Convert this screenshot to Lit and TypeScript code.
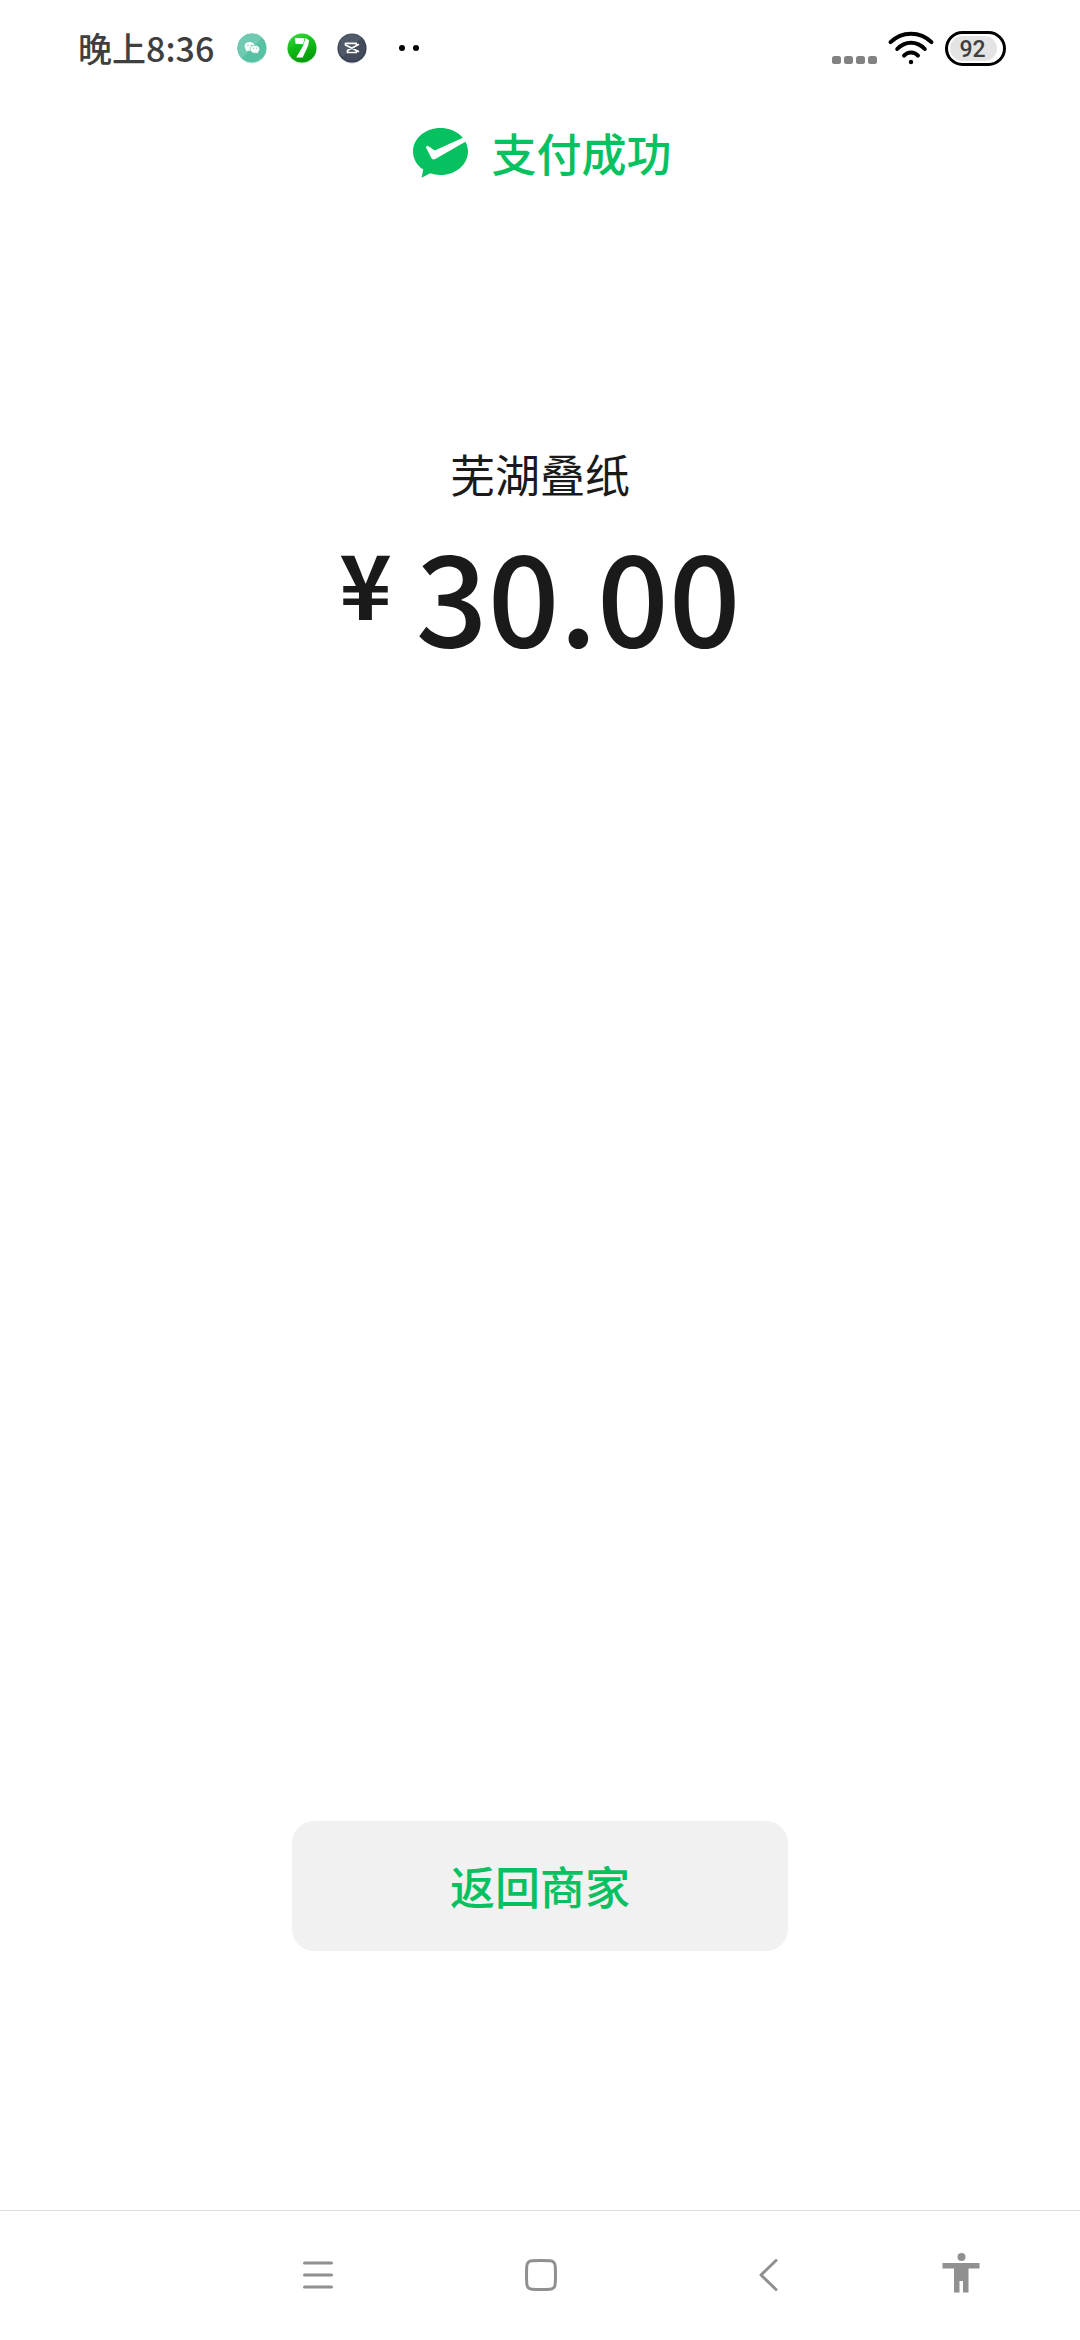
import { LitElement, html, css } from "lit";
import { customElement, property } from "lit/decorators.js";

@customElement("status-bar")
class StatusBar extends LitElement {
  @property() time = "";
  @property({ type: Number }) battery = 0;

  static styles = css`
    :host {
      display: flex;
      align-items: center;
      justify-content: space-between;
      height: 96px;
      padding: 0 74px 0 78px;
      color: #3f3f3f;
    }
    .side {
      display: flex;
      align-items: center;
    }
    .time {
      margin-right: 22px;
      font-size: 34px;
      line-height: 48px;
      font-weight: 500;
    }
    .apps {
      display: flex;
      gap: 18px;
      margin-right: 30px;
    }
    .signal {
      align-self: flex-end;
      margin-right: 9px;
    }
    .wifi {
      margin-right: 10px;
    }
    .battery {
      box-sizing: border-box;
      width: 61px;
      height: 35px;
      padding: 2px;
      border: 3px solid #000;
      border-radius: 18px;
    }
    .level {
      box-sizing: border-box;
      width: 92%;
      height: 25px;
      padding-right: 2px;
      border-radius: 13px;
      background: #e4e4e4;
      font-family: Roboto, "Liberation Sans", sans-serif;
      font-size: 23px;
      line-height: 28px;
      font-weight: 500;
      text-align: center;
    }
    svg {
      display: block;
    }
  `;

  render() {
    return html`
      <div class="side">
        <span class="time">${this.time}</span>
        <span class="apps">
          <svg width="32" height="32" viewBox="0 0 32 32" aria-hidden="true">
            <circle cx="16" cy="17" r="14.5" fill="#d5eee7" />
            <circle cx="16" cy="16" r="14.5" fill="#58c1a4" />
            <path d="M5.7 26.3A14.5 14.5 0 0 1 26.3 5.7Z" fill="#6fcab1" />
            <ellipse cx="13.6" cy="14.4" rx="5" ry="4.3" fill="#fff" />
            <path d="M10.3 17l-.4 2.6 2.6-1.4z" fill="#fff" />
            <ellipse cx="18.8" cy="17.2" rx="4.8" ry="4" fill="#fff" stroke="#5fc4a8" stroke-width=".7" />
            <path d="M20 20l2 1.5.2-2.5z" fill="#fff" />
            <g fill="#5fc4a8">
              <circle cx="12" cy="13.2" r=".7" />
              <circle cx="15.2" cy="13.2" r=".7" />
              <circle cx="17.4" cy="16.2" r=".6" />
              <circle cx="20.4" cy="16.2" r=".6" />
            </g>
          </svg>
          <svg width="32" height="32" viewBox="0 0 32 32" aria-hidden="true">
            <defs>
              <linearGradient id="g" x1="0" y1="0" x2=".4" y2="1">
                <stop offset="0" stop-color="#45dc48" />
                <stop offset=".5" stop-color="#12bd18" />
                <stop offset="1" stop-color="#079e0c" />
              </linearGradient>
            </defs>
            <circle cx="16" cy="17" r="14.5" fill="#cdeccd" />
            <circle cx="16" cy="16" r="14.5" fill="url(#g)" />
            <path d="M9 6L18.5 6.3 17.2 12.2 9.5 11.8Z" fill="#fff" />
            <path d="M19.5 6L23 8.3 22.3 13.2 16.7 25.6 10.2 25.6 17.2 13.6Z" fill="#fff" />
          </svg>
          <svg width="32" height="32" viewBox="0 0 32 32" aria-hidden="true">
            <circle cx="16" cy="17" r="14.5" fill="#c9ccd3" />
            <circle cx="16" cy="16" r="14.5" fill="#313b4d" />
            <circle cx="16" cy="15.4" r="13.4" fill="#424c5c" />
            <path d="M6.5 24.9A13.4 13.4 0 0 1 25.5 5.9Z" fill="#515a69" />
            <path
              d="M23 12.3L11.5 18.4V20.5H20.3V18.9M23 19.7L9.5 13V11.3H20.3V13"
              fill="none"
              stroke="#fff"
              stroke-width="1.7"
              stroke-linejoin="round"
            />
          </svg>
        </span>
        <svg width="22" height="8" viewBox="0 0 22 8" fill="#000" aria-hidden="true">
          <circle cx="4" cy="4" r="3" />
          <circle cx="18" cy="4" r="3" />
        </svg>
      </div>
      <div class="side">
        <svg class="signal" width="46" height="10" viewBox="0 0 46 10" fill="#828282" aria-hidden="true">
          <rect x="0" y="0" width="9" height="8" rx="2.5" />
          <rect x="12" y="0" width="9" height="8" rx="2.5" />
          <rect x="24" y="0" width="9" height="8" rx="2.5" />
          <rect x="36" y="0" width="9" height="8" rx="2.5" />
        </svg>
        <svg class="wifi" width="48" height="36" viewBox="0 0 48 36" aria-hidden="true">
          <g fill="none" stroke="#000" stroke-width="4" stroke-linecap="round">
            <path d="M3.5 12.2C14.8 .8 33.2 .8 44.5 12.2" />
            <path d="M10.2 19C18 10.6 30 10.6 37.8 19" />
            <path d="M17 25.6C20.800 21.400 27.200 21.400 31 25.600" />
          </g>
          <circle cx="24" cy="32" r="2.200" />
        </svg>
        <div class="battery"><div class="level">${this.battery}</div></div>
      </div>
    `;
  }
}

@customElement("nav-bar")
class NavBar extends LitElement {
  static styles = css`
    :host {
      display: grid;
      grid-template-columns: 226fr 220fr 234fr 151fr;
      height: 127px;
      padding: 0 4% 2px 19%;
      border-top: 1px solid #dedede;
    }
    button {
      display: flex;
      align-items: center;
      justify-content: center;
      padding: 0;
      border: 0;
      background: none;
      color: #909090;
    }
  `;

  render() {
    return html`
      <button aria-label="最近任务">
        <svg width="40" height="44" viewBox="0 0 40 44" stroke="currentColor" stroke-width="3" stroke-linecap="round">
          <path d="M6.5 10H33.5M6.5 22H33.5M6.5 34H33.5" />
        </svg>
      </button>
      <button aria-label="主屏幕">
        <svg width="40" height="44" viewBox="0 0 40 44" fill="none" stroke="currentColor" stroke-width="3">
          <path d="M11 7.8Q20 7.200 29 7.800 33.800 8.200 34.200 13 34.800 22 34.200 31 33.800 35.800 29 36.200 20 36.800 11 36.200 6.200 35.800 5.800 31 5.200 22 5.800 13 6.200 8.200 11 7.800Z" />
        </svg>
      </button>
      <button aria-label="返回">
        <svg width="40" height="44" viewBox="0 0 40 44" fill="none" stroke="currentColor" stroke-width="3" stroke-linecap="round" stroke-linejoin="round">
          <path d="M27 7.500L12 22 27 36.500" />
        </svg>
      </button>
      <button aria-label="无障碍">
        <svg width="40" height="44" viewBox="0 0 40 44" fill="currentColor">
          <circle cx="20.500" cy="4" r="4" />
          <path d="M1.500 10H38.500V15.500H27.500V39.500H22V28H18.500V39.500H13V15.500H1.500Z" />
        </svg>
      </button>
    `;
  }
}

@customElement("app-root")
class AppRoot extends LitElement {
  static styles = css`
    :host {
      display: flex;
      flex-direction: column;
      box-sizing: border-box;
      min-height: 100vh;
      background: #fff;
      color: #1a1a1a;
      font-family: "Noto Sans CJK SC", sans-serif;
      font-size: 45px;
      line-height: 64px;
    }
    .result {
      display: flex;
      align-items: center;
      justify-content: center;
      gap: 22px;
      margin: 0;
      padding: 25px 0 0 4px;
      color: #07c160;
      font-size: 45px;
      line-height: 64px;
      font-weight: 500;
    }
    main {
      flex: 1;
      display: flex;
      flex-direction: column;
      align-items: center;
      padding: 257px 0 259px;
    }
    .payee,
    .amount {
      margin: 0;
    }
    .amount {
      display: flex;
      align-items: flex-start;
      gap: 24px;
      padding-top: 9px;
      font-size: 126px;
      line-height: 154px;
      font-weight: 500;
    }
    .currency {
      font-size: 89px;
      line-height: 134px;
      font-weight: 700;
    }
    .back {
      width: 46%;
      height: 130px;
      margin-top: auto;
      padding: 0;
      border: 0;
      border-radius: 22px;
      background: #f1f1f1;
      color: #07c160;
      font: inherit;
      font-weight: 500;
    }
  `;

  render() {
    return html`
      <status-bar time="晚上8:36" battery="92"></status-bar>
      <h1 class="result">
        <svg width="57" height="52" viewBox="0 0 57 52" aria-hidden="true">
          <path
            d="M28.500 1C43.500 1 56 11.200 56 24.500S43.500 48 28.500 48C24.800 48 21.400 47.400 18.200 46.300L10.200 50.400C9.800 50.500 9.600 50.200 9.700 49.800L11.300 42.600C4.800 38.300 1 31.800 1 24.500 1 11.200 13.500 1 28.500 1Z"
            fill="#07c160"
          />
          <path
            d="M14 20.600C13.600 19.200 15.200 18.400 16.500 19.200L22.700 23.400 51 10.800 56 13.200 23.700 31.800C21.800 32.900 20.200 32.600 19.400 31Z"
            fill="#fff"
          />
        </svg>
        支付成功
      </h1>
      <main>
        <p class="payee">芜湖叠纸</p>
        <p class="amount"><span class="currency">¥</span><span>30.00</span></p>
        <button class="back">返回商家</button>
      </main>
      <nav-bar></nav-bar>
    `;
  }
}
